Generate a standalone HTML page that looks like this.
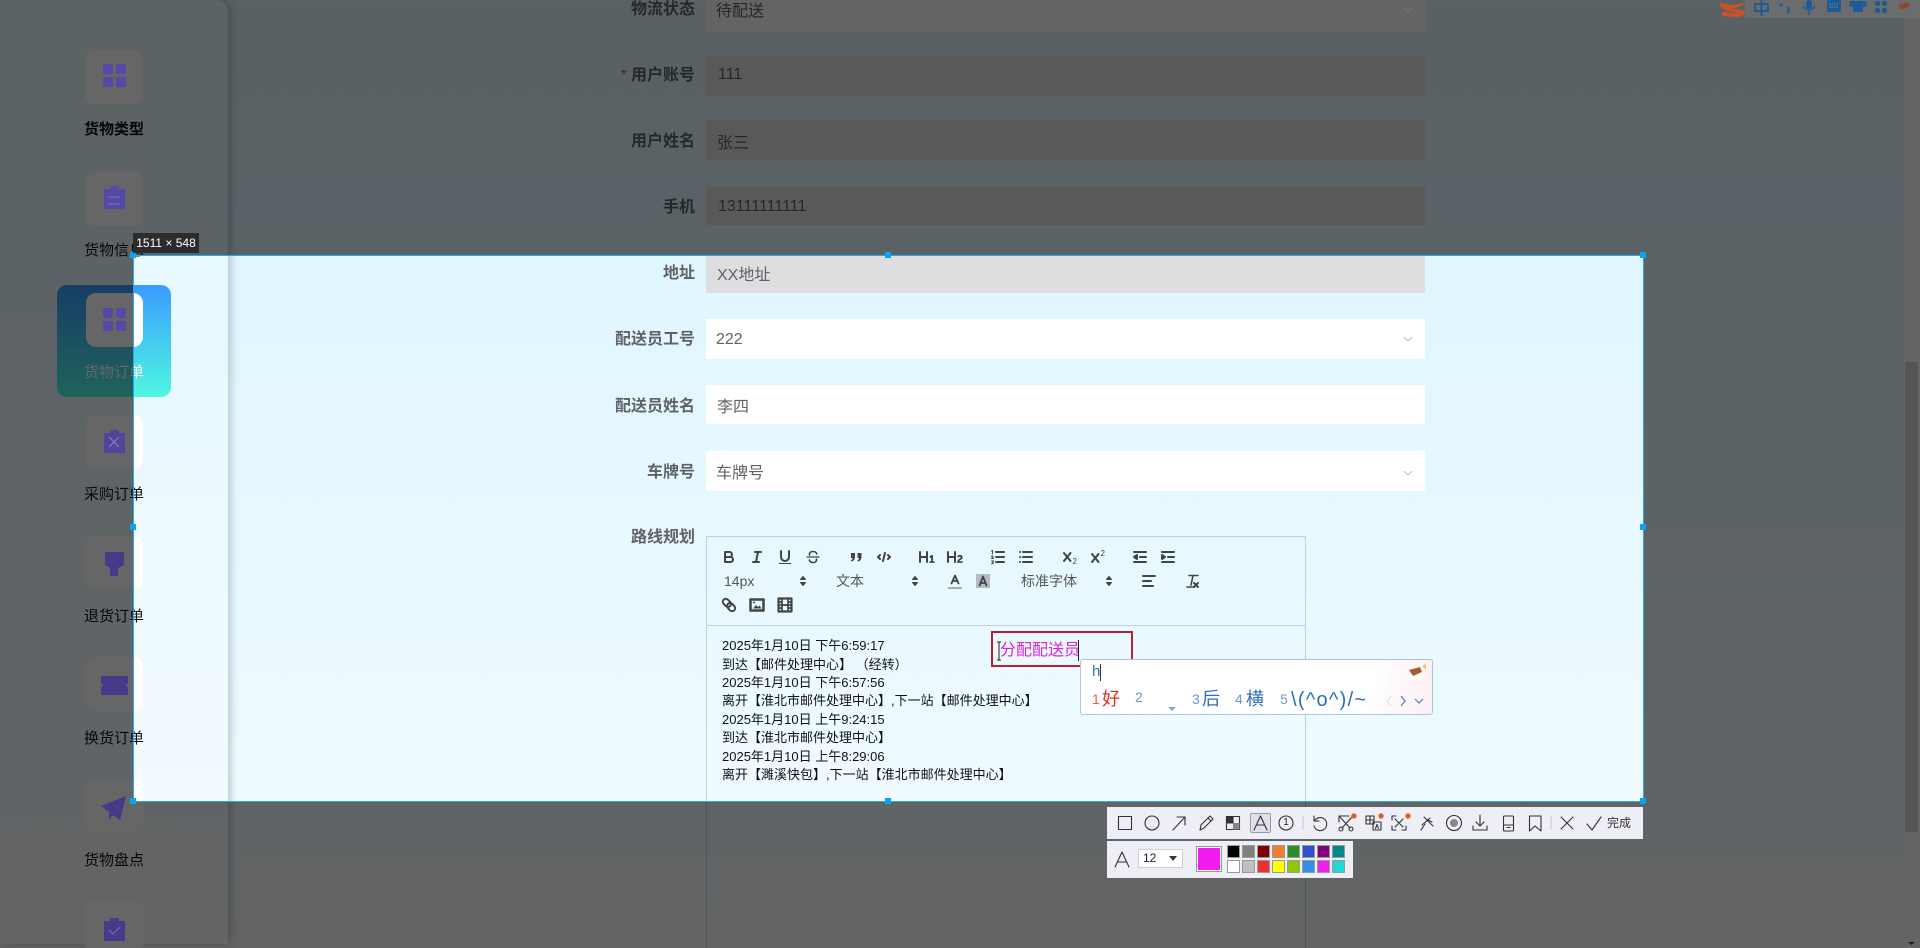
<!DOCTYPE html>
<html lang="zh">
<head>
<meta charset="utf-8">
<title>货物订单</title>
<style>
*{box-sizing:border-box;margin:0;padding:0}
html,body{width:1920px;height:948px;overflow:hidden}
body{position:relative;font-family:"Liberation Sans","Noto Sans CJK SC",sans-serif;background:linear-gradient(180deg,#dcf5fa 0,#e0f6ff 255px,#effaff 800px,#fafafa 948px)}
.a{position:absolute;white-space:nowrap}
.side{left:0;top:0;width:228px;height:944px;background:rgba(255,255,255,.22);border-top-right-radius:12px;box-shadow:3px 0 8px rgba(60,90,110,.3)}
.tile{left:85px;width:58px;height:54px;background:#fff;border-radius:10px}
.sl{left:84px;width:60px;font-size:15px;line-height:20px;color:#111;text-align:center}
.act{left:57px;top:285px;width:114px;height:112px;border-radius:10px;background:linear-gradient(180deg,#3a9bff 0,#4ff7e2 100%)}
.l{right:1225px;font-size:16px;line-height:22px;color:#606266;font-weight:bold;text-align:right}
.i{left:706px;width:719px;background:#fff}
.g{background:#dedee0}
.v{font-size:16px;line-height:22px;color:#606266}
.ed{left:706px;top:536px;width:600px;height:430px;border:1px solid #bdd2dd}
.edl{left:0;top:88px;width:598px;height:1px;background:#bdd2dd}
.p{font-size:14px;line-height:20px;color:#555}
.t{left:722px;font-size:13px;line-height:18px;color:#111}
.mask{background:rgba(0,0,0,.6)}
.h{width:6px;height:6px;background:#0aa5f0}
.tb{background:#eeeef6}
.sw{width:13px;height:13px;border:1px solid #9a9a9a}
svg{position:absolute;left:0;top:0;overflow:visible}
</style>
</head>
<body>

<div class="a side"></div>
<div class="a act"></div>
<div class="a tile" style="top:50px"></div>
<div class="a tile" style="top:172px"></div>
<div class="a tile" style="top:293px;left:86px;width:57px"></div>
<div class="a tile" style="top:415px"></div>
<div class="a tile" style="top:536px"></div>
<div class="a tile" style="top:657px"></div>
<div class="a tile" style="top:779px"></div>
<div class="a tile" style="top:900px"></div>
<div class="a sl" style="top:120px;font-weight:bold">货物类型</div>
<div class="a sl" style="top:241px">货物信息</div>
<div class="a sl" style="top:363px;color:#fff">货物订单</div>
<div class="a sl" style="top:485px">采购订单</div>
<div class="a sl" style="top:607px">退货订单</div>
<div class="a sl" style="top:729px">换货订单</div>
<div class="a sl" style="top:851px">货物盘点</div>

<div class="a i" style="top:-8px;height:40px;background:#fafafa"></div>
<div class="a i g" style="top:56px;height:40px"></div>
<div class="a i g" style="top:120px;height:40px"></div>
<div class="a i g" style="top:187px;height:38px"></div>
<div class="a i g" style="top:255px;height:38px"></div>
<div class="a i" style="top:319px;height:40px"></div>
<div class="a i" style="top:385px;height:39px"></div>
<div class="a i" style="top:451px;height:40px"></div>

<div class="a l" style="top:-1px">物流状态</div>
<div class="a l" style="top:65px"><span style="color:#e05060;font-weight:normal;margin-right:4px">*</span>用户账号</div>
<div class="a l" style="top:131px">用户姓名</div>
<div class="a l" style="top:197px">手机</div>
<div class="a l" style="top:263px">地址</div>
<div class="a l" style="top:329px">配送员工号</div>
<div class="a l" style="top:396px">配送员姓名</div>
<div class="a l" style="top:462px">车牌号</div>
<div class="a l" style="top:527px">路线规划</div>

<div class="a v" style="left:716px;top:1px">待配送</div>
<div class="a v" style="left:718px;top:64px">111</div>
<div class="a v" style="left:717px;top:133px">张三</div>
<div class="a v" style="left:718px;top:196px">13111111111</div>
<div class="a v" style="left:717px;top:265px">XX地址</div>
<div class="a v" style="left:716px;top:329px">222</div>
<div class="a v" style="left:717px;top:397px">李四</div>
<div class="a v" style="left:716px;top:463px">车牌号</div>

<div class="a ed"><div class="a edl"></div></div>
<div class="a p" style="left:724px;top:571px">14px</div>
<div class="a p" style="left:836px;top:571px">文本</div>
<div class="a p" style="left:1021px;top:571px">标准字体</div>

<div class="a t" style="top:637px">2025年1月10日 下午6:59:17</div>
<div class="a t" style="top:656px">到达【邮件处理中心】&nbsp;（经转）</div>
<div class="a t" style="top:674px">2025年1月10日 下午6:57:56</div>
<div class="a t" style="top:692px">离开【淮北市邮件处理中心】,下一站【邮件处理中心】</div>
<div class="a t" style="top:711px">2025年1月10日 上午9:24:15</div>
<div class="a t" style="top:729px">到达【淮北市邮件处理中心】</div>
<div class="a t" style="top:748px">2025年1月10日 上午8:29:06</div>
<div class="a t" style="top:766px">离开【濉溪快包】,下一站【淮北市邮件处理中心】</div>

<!-- editor toolbar icons -->
<svg width="1920" height="948" viewBox="0 0 1920 948" fill="none" stroke="#444" stroke-width="2" stroke-linecap="round" stroke-linejoin="round">
<g transform="translate(720,548)"><path d="M5,4H9.5A2.5,2.5,0,0,1,12,6.5v0A2.5,2.5,0,0,1,9.5,9H5V4Z"/><path d="M5,9h5.5A2.5,2.5,0,0,1,13,11.5v0A2.5,2.5,0,0,1,10.5,14H5V9Z"/></g>
<g transform="translate(748,548)"><path d="M7,4H13M5,14H11M8,14L10,4"/></g>
<g transform="translate(776,548)"><path d="M5,3V9a4,4,0,0,0,8,0V3"/><rect x="3" y="15" width="12" height="1" fill="#444" stroke="none"/></g>
<g transform="translate(804,548)" stroke-width="1.600"><path d="M3,9H15" stroke-width="1.200"/><path d="M5.5,7C5,4.5 7,3.5 9,3.5C11,3.5 12.5,4.5 12.7,6"/><path d="M12.5,11C13,13.5 11,14.5 9,14.5C7,14.5 5.5,13.5 5.3,12"/></g>
<g transform="translate(847,548)" fill="#444" stroke="none"><path d="M4,5h4v4c0,2.5-1.5,4-3.5,4.5l-.5-1.2c1-.5,1.5-1.3,1.6-2.3H4Z"/><path d="M10.5,5h4v4c0,2.5-1.5,4-3.5,4.5l-.5-1.2c1-.5,1.5-1.3,1.6-2.3H10.5Z"/></g>
<g transform="translate(875,548)"><path d="M5,7L3,9L5,11M13,7L15,9L13,11M10,5L8,13"/></g>
<g transform="translate(918,548)" fill="#444" stroke="none"><path d="M10,4V14a1,1,0,0,1-2,0V10H3v4a1,1,0,0,1-2,0V4A1,1,0,0,1,3,4V8H8V4a1,1,0,0,1,2,0Zm6.06787,9.209H14.98975V7.59863a.54085.54085,0,0,0-.605-.60547h-.62744a1.01119,1.01119,0,0,0-.748.29688L11.645,8.56641a.5435.5435,0,0,0-.022.8584l.28613.30762a.53861.53861,0,0,0,.84717.0332l.09912-.08789a1.2137,1.2137,0,0,0,.2417-.35254h.02246s-.01123.30859-.01123.60547V13.209H12.041a.54085.54085,0,0,0-.605.60547v.43945a.54085.54085,0,0,0,.605.60547h4.02686a.54085.54085,0,0,0,.605-.60547v-.43945A.54085.54085,0,0,0,16.06787,13.209Z"/></g>
<g transform="translate(946,548)" fill="#444" stroke="none"><path d="M16.73975,13.81445v.43945a.54085.54085,0,0,1-.605.60547H11.855a.58392.58392,0,0,1-.64893-.60547V14.0127c0-2.90527,3.39941-3.42187,3.39941-4.55469a.77675.77675,0,0,0-.84717-.78125,1.17684,1.17684,0,0,0-.83594.38477c-.2749.26367-.561.374-.85791.13184l-.4292-.34082c-.30811-.24219-.38525-.51758-.1543-.81445a2.97155,2.97155,0,0,1,2.45361-1.17676,2.45393,2.45393,0,0,1,2.68408,2.40918c0,2.45312-3.1792,2.92676-3.27832,3.93848h2.79443A.54085.54085,0,0,1,16.73975,13.81445ZM9,3A.99974.99974,0,0,0,8,4V8H3V4A1,1,0,0,0,1,4V14a1,1,0,0,0,2,0V10H8v4a1,1,0,0,0,2,0V4A.99974.99974,0,0,0,9,3Z"/></g>
<g transform="translate(989,548)"><path d="M7,4H15M7,9H15M7,14H15"/><path d="M2.5,3L3.5,2.5V6M2.5,8.5C3.5,7.5 4.5,8.2 4,9.2L2.5,10.5H4.5M2.5,13H4.5L3.5,14.2C4.8,14.2 4.8,16 2.5,15.8" stroke-width="1"/></g>
<g transform="translate(1017,548)"><path d="M6,4H15M6,9H15M6,14H15M3,4H3.01M3,9H3.01M3,14H3.01"/></g>
<g transform="translate(1060,548)"><path d="M4,5L10.5,13M10.5,5L4,13"/><text x="12.5" y="16" font-size="8" font-family="Liberation Sans" fill="#444" stroke="none">2</text></g>
<g transform="translate(1088,548)"><path d="M4,6L10.5,14M10.5,6L4,14"/><text x="12.5" y="8" font-size="8" font-family="Liberation Sans" fill="#444" stroke="none">2</text></g>
<g transform="translate(1131,548)"><path d="M3,14H15M3,4H15M9,9H15"/><path d="M6,7L3,9L6,11Z" fill="#444"/></g>
<g transform="translate(1159,548)"><path d="M3,14H15M3,4H15M9,9H15"/><path d="M3,7L6,9L3,11Z" fill="#444"/></g>
<!-- pickers -->
<g transform="translate(794,572)" stroke-width="1" fill="#444"><path d="M6.5,10.5L9,13.5L11.5,10.5ZM6.5,7.5L9,4.5L11.5,7.5Z"/></g>
<g transform="translate(906,572)" stroke-width="1" fill="#444"><path d="M6.5,10.5L9,13.5L11.5,10.5ZM6.5,7.5L9,4.5L11.5,7.5Z"/></g>
<g transform="translate(1100,572)" stroke-width="1" fill="#444"><path d="M6.5,10.5L9,13.5L11.5,10.5ZM6.5,7.5L9,4.5L11.5,7.5Z"/></g>
<g transform="translate(946,572)"><path d="M5.5,11.5L9,3.5L12.5,11.5M6.8,9H11.2" stroke-width="1.8"/><rect x="2" y="15" width="14" height="2" fill="#aaa" stroke="none"/></g>
<g transform="translate(974,572)"><rect x="2" y="2" width="14" height="14" fill="#b4bcc0" stroke="none"/><path d="M5.5,13.5L9,4.5L12.5,13.5M6.8,11H11.2" stroke-width="1.8"/></g>
<g transform="translate(1140,572)"><path d="M3,4H15M3,9H11M3,14H13"/></g>
<g transform="translate(1183,572)"><path d="M6,3.5H15M10,3.5L8,13M4,15H10" stroke-width="1.6"/><path d="M11,11L15,15M15,11L11,15" stroke-width="2"/></g>
<g transform="translate(720,596)"><g transform="rotate(45 9 9)"><rect x="1.5" y="6" width="9" height="6" rx="3" stroke-width="2"/><rect x="7.5" y="6" width="9" height="6" rx="3" stroke-width="2"/></g></g>
<g transform="translate(748,596)"><rect x="2.5" y="3.5" width="13" height="11" stroke-width="2.500"/><path d="M5,12.5L8,9L10,11L11.5,9.5L13.5,12.5Z" fill="#444" stroke="none"/><circle cx="6" cy="6.5" r="1" fill="#444" stroke="none"/></g>
<g transform="translate(776,596)"><rect x="2.5" y="2.5" width="13" height="13" stroke-width="2.200"/><path d="M6,3V15M12,3V15M3,9H15M3,6H6M3,12H6M12,6H15M12,12H15" stroke-width="1.700"/></g>
</svg>

<!-- dim overlay -->
<div class="a mask" style="left:0;top:0;width:1920px;height:255px"></div>
<div class="a mask" style="left:0;top:255px;width:133px;height:547px"></div>
<div class="a mask" style="left:1644px;top:255px;width:276px;height:547px"></div>
<div class="a mask" style="left:0;top:802px;width:1920px;height:146px"></div>

<!-- scrollbar -->
<div class="a" style="left:1904px;top:0;width:16px;height:948px;background:#656565"></div>
<div class="a" style="left:1905px;top:362px;width:13px;height:470px;background:#555"></div>

<!-- sidebar icons, tray, chevrons on top of dim -->
<svg width="1920" height="948" viewBox="0 0 1920 948" fill="none">
<g fill="#5549a8">
<rect x="103" y="64" width="10" height="10" rx="2"/><rect x="116" y="64" width="10" height="10" rx="2"/><rect x="103" y="77" width="10" height="10" rx="2"/><rect x="116" y="77" width="10" height="10" rx="2"/>
<rect x="104" y="189" width="21" height="20"/><rect x="110" y="186" width="9" height="4" rx="1"/>
<rect x="103" y="308" width="10" height="10" rx="2"/><rect x="116" y="308" width="10" height="10" rx="2"/><rect x="103" y="321" width="10" height="10" rx="2"/><rect x="116" y="321" width="10" height="10" rx="2"/>
<rect x="104" y="433" width="21" height="20" fill="#50449c"/><rect x="110" y="430" width="9" height="4" rx="1" fill="#50449c"/>
</g>
<path d="M109,437L119,447M119,437L109,447" stroke="#8b83c0" stroke-width="1"/>
<path d="M108,197H120M108,204H120" stroke="#7d75bd" stroke-width="1"/>
<g fill="#473a8a">
<path d="M105,552H124V565L118,568V576L110,576V568L105,565Z"/>
<path d="M101,676H128V684C125,684 125,687 128,687V695H101V687C104,687 104,684 101,684Z"/>
<path d="M101,806L126,796L120,820L113,815L109,820L109,812Z"/>
<rect x="104" y="921" width="21" height="20"/><rect x="110" y="918" width="9" height="4" rx="1"/>
</g>
<path d="M109,930L113,934L120,927" stroke="#7a70b0" stroke-width="1"/>
<path d="M1404,8L1408,12L1412,8" stroke="#7a7a7a" stroke-width="1"/>
<!-- tray -->
<rect x="1745" y="0" width="175" height="18" fill="#6a6c6e"/>
<path d="M1720,2C1726,6 1738,5 1745,2C1744,6 1734,9 1730,8C1738,10 1746,9 1745,13C1744,18 1730,18 1721,15C1722,11 1725,11 1727,12C1733,13 1737,13 1736,12C1729,12 1718,9 1720,2Z" fill="#c8522c"/>
<g fill="#1e5a94" stroke="#1e5a94">
<path d="M1755,4H1768V11H1755ZM1761.500,0V16" fill="none" stroke-width="2"/>
<circle cx="1781" cy="5" r="1.600" stroke="none"/><path d="M1788,7Q1790,10 1787,13" fill="none" stroke-width="2"/>
<rect x="1806" y="0" width="6" height="9" rx="3" stroke="none"/><path d="M1803,6Q1809,14 1815,6M1809,11V15" fill="none" stroke-width="1.500"/>
<rect x="1827" y="0" width="14" height="12" rx="2" stroke="none"/>
<path d="M1850,1H1866L1867,6L1863,7V12H1853V7L1849,6Z" stroke="none"/>
<rect x="1875" y="1" width="5" height="5" rx="2" stroke="none"/><rect x="1882" y="1" width="5" height="5" rx="2" stroke="none"/><rect x="1875" y="8" width="5" height="5" rx="2" stroke="none"/><rect x="1882" y="8" width="5" height="5" rx="2" stroke="none"/>
</g>
<path d="M1829,4H1839M1829,7H1839" stroke="#6a8aa8" stroke-width="1" stroke-dasharray="1.500 1"/>
<path d="M1898,5L1908,2L1910,6L1902,10Z" fill="#8a4a2a"/>
<!-- scroll arrow -->
<path d="M1908,942H1915L1911.500,945Z" fill="#222"/>
</svg>

<!-- lit chevrons -->
<svg width="1920" height="948" viewBox="0 0 1920 948" fill="none" stroke="#b8bcc4" stroke-width="1">
<path d="M1404,337L1408,341L1412,337M1404,471L1408,475L1412,471"/>
</svg>

<!-- selection frame -->
<div class="a" style="left:133px;top:255px;width:1511px;height:547px;border:1px solid #2aa8e8"></div>
<div class="a h" style="left:130px;top:252px"></div>
<div class="a h" style="left:885px;top:252px"></div>
<div class="a h" style="left:1640px;top:252px"></div>
<div class="a h" style="left:130px;top:524px"></div>
<div class="a h" style="left:1640px;top:524px"></div>
<div class="a h" style="left:130px;top:798px"></div>
<div class="a h" style="left:885px;top:798px"></div>
<div class="a h" style="left:1640px;top:798px"></div>
<div class="a" style="left:133px;top:233px;width:66px;height:20px;background:#2c2c2c;color:#fff;font-size:12px;line-height:20px;text-align:center">1511 × 548</div>

<!-- annotation box -->
<div class="a" style="left:991px;top:631px;width:142px;height:36px;border:2px solid #bc1f2c"></div>
<div class="a" style="left:1000px;top:640px;font-size:16px;line-height:22px;color:#dc20dc">分配配送员</div>
<div class="a" style="left:1078px;top:640px;width:1px;height:21px;background:#222"></div>
<svg width="1920" height="948" viewBox="0 0 1920 948" fill="none" stroke="#222" stroke-width="1"><path d="M997,642H1001M997,660H1001M999,642V660"/></svg>

<!-- IME -->
<div class="a" style="left:1080px;top:659px;width:353px;height:56px;background:linear-gradient(100deg,#fff 82%,#fdeef2 100%);border:1px solid #a8c8e2;border-radius:3px"></div>
<div class="a" style="left:1092px;top:662px;font-size:15px;line-height:20px;color:#3a70b0">h</div>
<div class="a" style="left:1100px;top:664px;width:1px;height:17px;background:#333"></div>
<div class="a" style="left:1092px;top:689px;font-size:14px;line-height:20px;color:#e8604c">1</div>
<div class="a" style="left:1102px;top:687px;font-size:18px;line-height:24px;color:#e03020">好</div>
<div class="a" style="left:1135px;top:687px;font-size:14px;line-height:20px;color:#6a9ad0">2</div>
<div class="a" style="left:1192px;top:689px;font-size:14px;line-height:20px;color:#6a9ad0">3</div>
<div class="a" style="left:1202px;top:687px;font-size:18px;line-height:24px;color:#2a70b8">后</div>
<div class="a" style="left:1235px;top:689px;font-size:14px;line-height:20px;color:#6a9ad0">4</div>
<div class="a" style="left:1246px;top:687px;font-size:18px;line-height:24px;color:#2a70b8">横</div>
<div class="a" style="left:1280px;top:689px;font-size:14px;line-height:20px;color:#6a9ad0">5</div>
<div class="a" style="left:1291px;top:687px;font-size:20px;line-height:26px;letter-spacing:1.300px;color:#2a70b8">\(^o^)/~</div>
<svg width="1920" height="948" viewBox="0 0 1920 948" fill="none">
<path d="M1168,707H1176L1172,711Z" fill="#7aa8d8"/>
<path d="M1391,696L1387,701L1391,706" stroke="#dfe6ee" stroke-width="1.200"/>
<path d="M1401,696L1405,701L1401,706" stroke="#4a80c0" stroke-width="1.200"/>
<path d="M1415,699L1419,703L1423,699" stroke="#4a80c0" stroke-width="1.200"/>
<circle cx="1416" cy="673" r="7" fill="#fff" opacity=".8"/>
<path d="M1409,670L1420,667L1422,672L1413,676Z" fill="#a85a30"/>
<path d="M1422,666L1426,664L1426,670Z" fill="#f0c860"/>
</svg>

<!-- capture toolbars -->
<div class="a tb" style="left:1107px;top:807px;width:536px;height:32px"></div>
<div class="a tb" style="left:1107px;top:841px;width:246px;height:37px"></div>
<div class="a" style="left:1250px;top:813px;width:21px;height:20px;background:#dfe0ea;border:1px solid #9a9aa4;border-radius:2px"></div>
<div class="a" style="left:1279px;top:816px;width:14px;height:14px;text-align:center;font-size:10px;line-height:14px;color:#222">1</div>
<div class="a" style="left:1607px;top:815px;font-size:12px;line-height:16px;color:#333">完成</div>
<div class="a" style="left:1138px;top:849px;width:45px;height:19px;background:#fff;border:1px solid #d0d0d8;font-size:12px;line-height:17px;padding-left:4px;color:#222">12</div>
<div class="a" style="left:1196px;top:846px;width:26px;height:26px;background:#f01cf0;border:1px solid #999;box-shadow:inset 0 0 0 1px #fff"></div>

<svg width="1920" height="948" viewBox="0 0 1920 948" fill="none" stroke="#333" stroke-width="1.100" stroke-linejoin="round" stroke-linecap="round">
<rect x="1118.500" y="816.500" width="13" height="13"/>
<circle cx="1152" cy="823" r="7"/>
<path d="M1173,830L1185,817M1177,817H1185V825"/>
<path d="M1200,830L1201,825L1210,816L1213,819L1204,828ZM1208,818L1211,821"/>
<rect x="1226.500" y="816.500" width="13" height="13"/>
<rect x="1226.500" y="816.500" width="6.500" height="6.500" fill="#333"/><rect x="1233" y="823" width="6.500" height="6.500" fill="#888" stroke="none"/>
<path d="M1254,830L1260.500,816L1267,830M1256.300,825H1264.700"/>
<circle cx="1286" cy="823" r="7"/>
<path d="M1303,817V829" stroke="#c8c8d2"/>
<path d="M1314,816V821H1319M1314.500,821A6.500,6.500,0,1,1,1314,826"/>
<path d="M1340,817L1350,828M1352,817L1342,828"/><circle cx="1341" cy="829" r="2"/><circle cx="1351" cy="829" r="2"/>
<path d="M1339,822V816H1349"/>
<rect x="1366" y="816" width="8" height="8"/><path d="M1370,816V824M1366,820H1374"/><rect x="1373" y="822" width="8" height="8"/><path d="M1375.500,828.500L1377,824.500L1378.500,828.500"/>
<path d="M1392,820V816H1396M1392,826V830H1396M1406,826V830H1402M1395,819L1403,827M1403,819L1395,827"/>
<path d="M1424,817L1433,826M1422,825L1430,818M1425,824L1421,830M1426,819L1432,822"/>
<circle cx="1454" cy="823" r="7.500"/><circle cx="1454" cy="823" r="4" fill="#888" stroke="none"/>
<path d="M1480,815V826M1476,822L1480,826L1484,822M1473,826V830H1487V826"/>
<rect x="1503.500" y="816" width="10" height="15" rx="1"/><path d="M1507,827.500H1510M1504,825H1513"/>
<path d="M1529.500,816H1541V831L1535,826L1529.500,831Z"/>
<path d="M1551,817V829" stroke="#c8c8d2"/>
<path d="M1561,817L1573,829M1573,817L1561,829"/>
<path d="M1587,824L1592,830L1601,817"/>
<circle cx="1354" cy="816" r="2.700" fill="#e0602c" stroke="none"/>
<circle cx="1381" cy="816" r="2.700" fill="#e0602c" stroke="none"/>
<circle cx="1408" cy="816" r="2.700" fill="#e0602c" stroke="none"/>
<path d="M1115,867L1122,852L1129,867M1117.500,862H1126.500"/>
<path d="M1169,856H1177L1173,861Z" fill="#333" stroke="none"/>
</svg>

<div class="a sw" style="left:1227px;top:845px;background:#000"></div>
<div class="a sw" style="left:1242px;top:845px;background:#808080"></div>
<div class="a sw" style="left:1257px;top:845px;background:#800000"></div>
<div class="a sw" style="left:1272px;top:845px;background:#f08030"></div>
<div class="a sw" style="left:1287px;top:845px;background:#2e8b2e"></div>
<div class="a sw" style="left:1302px;top:845px;background:#3050d0"></div>
<div class="a sw" style="left:1317px;top:845px;background:#800080"></div>
<div class="a sw" style="left:1332px;top:845px;background:#008b8b"></div>
<div class="a sw" style="left:1227px;top:860px;background:#fff"></div>
<div class="a sw" style="left:1242px;top:860px;background:#c0c0c0"></div>
<div class="a sw" style="left:1257px;top:860px;background:#f03030"></div>
<div class="a sw" style="left:1272px;top:860px;background:#ffff00"></div>
<div class="a sw" style="left:1287px;top:860px;background:#90c800"></div>
<div class="a sw" style="left:1302px;top:860px;background:#3090e8"></div>
<div class="a sw" style="left:1317px;top:860px;background:#f020f0"></div>
<div class="a sw" style="left:1332px;top:860px;background:#20d8d8"></div>

</body>
</html>
